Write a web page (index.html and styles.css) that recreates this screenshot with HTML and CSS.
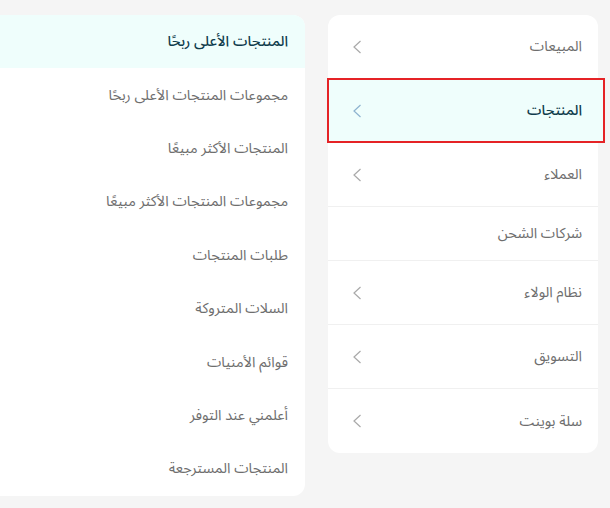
FILE: index.html
```html
<!DOCTYPE html>
<html lang="ar" dir="rtl">
<head>
<meta charset="utf-8">
<title>التقارير</title>
<link rel="stylesheet" href="styles.css">
</head>
<body>
    <div class="layout">
        <ul class="menu">
            <li class="menu-item">
                <span>المبيعات</span>
                <svg class="chev" width="10" height="14" viewBox="0 0 10 14"><polyline points="8.5,1 2,7 8.5,13"/></svg>
            </li>
            <li class="menu-item active">
                <span>المنتجات</span>
                <svg class="chev" width="10" height="14" viewBox="0 0 10 14"><polyline points="8.5,1 2,7 8.5,13"/></svg>
                <div class="highlight"></div>
            </li>
            <li class="menu-item">
                <span>العملاء</span>
                <svg class="chev" width="10" height="14" viewBox="0 0 10 14"><polyline points="8.5,1 2,7 8.5,13"/></svg>
            </li>
            <li class="menu-item short">
                <span>شركات الشحن</span>
            </li>
            <li class="menu-item">
                <span>نظام الولاء</span>
                <svg class="chev" width="10" height="14" viewBox="0 0 10 14"><polyline points="8.5,1 2,7 8.5,13"/></svg>
            </li>
            <li class="menu-item">
                <span>التسويق</span>
                <svg class="chev" width="10" height="14" viewBox="0 0 10 14"><polyline points="8.5,1 2,7 8.5,13"/></svg>
            </li>
            <li class="menu-item">
                <span>سلة بوينت</span>
                <svg class="chev" width="10" height="14" viewBox="0 0 10 14"><polyline points="8.5,1 2,7 8.5,13"/></svg>
            </li>
        </ul>

        <ul class="submenu">
            <li class="sub-item active">المنتجات الأعلى ربحًا</li>
            <li class="sub-item">مجموعات المنتجات الأعلى ربحًا</li>
            <li class="sub-item">المنتجات الأكثر مبيعًا</li>
            <li class="sub-item">مجموعات المنتجات الأكثر مبيعًا</li>
            <li class="sub-item">طلبات المنتجات</li>
            <li class="sub-item">السلات المتروكة</li>
            <li class="sub-item">قوائم الأمنيات</li>
            <li class="sub-item">أعلمني عند التوفر</li>
            <li class="sub-item">المنتجات المسترجعة</li>
        </ul>
    </div>
</body>
</html>
```

FILE: styles.css
```css
html, body {
    margin: 0;
    height: 100%;
    overflow: hidden;
}

body {
    background: #f5f5f5;
    font-family: "Noto Sans Arabic", "Noto Sans", "DejaVu Sans", sans-serif;
    font-size: 14.5px;
    color: #6e6e6e;
}

ul {
    list-style: none;
    margin: 0;
    padding: 0;
}

.layout {
    display: flex;
    align-items: flex-start;
    gap: 23px;
    padding: 15px 12px 0 0;
}

/* main menu (right) */
.menu {
    width: 270px;
    flex-shrink: 0;
    background: #fff;
    border-radius: 12px;
}

.menu-item {
    position: relative;
    display: flex;
    align-items: center;
    justify-content: space-between;
    height: 63px;
    padding: 0 16px 0 24px;
    border-bottom: 1px solid #f0f0f0;
}

.menu-item:last-child {
    border-bottom: none;
    height: 64px;
}

.menu-item.short {
    height: 53px;
}

.menu-item span {
    position: relative;
    z-index: 1;
}

.chev {
    position: relative;
    z-index: 1;
    fill: none;
    stroke: #a9a9a9;
    stroke-width: 1.2;
}

.menu-item.active {
    color: #0f3c4c;
    font-weight: 500;
}

.menu-item.active .chev {
    stroke: #8db3cf;
}

.highlight {
    position: absolute;
    top: -1px;
    bottom: -1px;
    right: -7px;
    left: -1px;
    background: #effefc;
    border: 2px solid #e52326;
}

/* sub menu (left) */
.submenu {
    width: 330px;
    flex-shrink: 0;
    background: #fff;
    border-radius: 12px;
    overflow: hidden;
}

.sub-item {
    display: flex;
    align-items: center;
    height: 53.4px;
    padding-right: 17px;
}

.sub-item.active {
    background: #effefc;
    color: #0f3c4c;
    font-weight: 500;
}
```
